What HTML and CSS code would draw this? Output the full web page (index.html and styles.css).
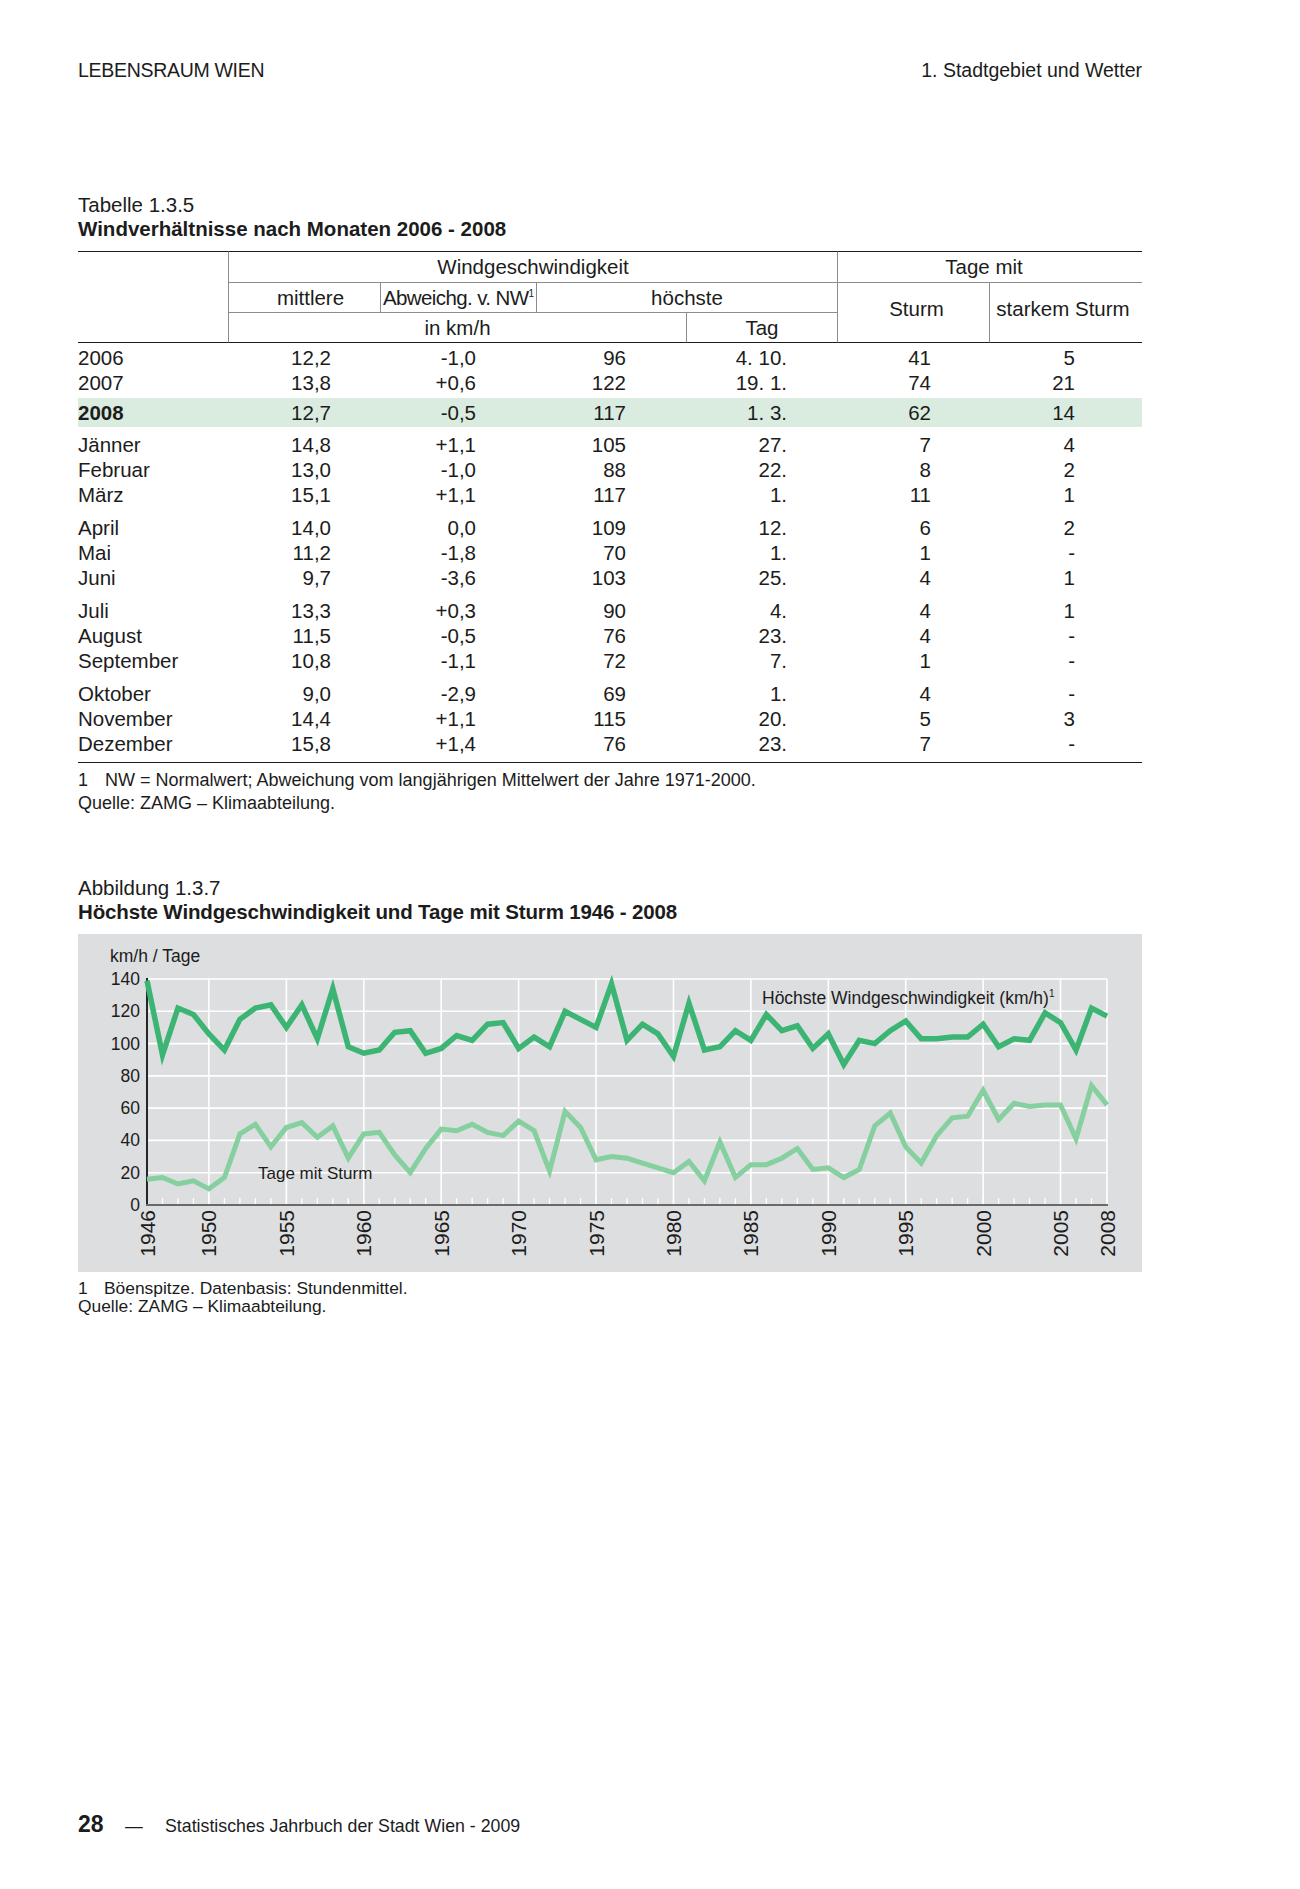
FILE: index.html
```html
<!DOCTYPE html>
<html lang="de">
<head>
<meta charset="utf-8">
<title>Windverhältnisse nach Monaten 2006 - 2008</title>
<link rel="stylesheet" href="styles.css">
</head>
<body>
<div class="page">
  <header class="running-head">
    <span class="rh-left">LEBENSRAUM WIEN</span>
    <span>1. Stadtgebiet und Wetter</span>
  </header>

  <section class="table-block">
    <div class="caption">
      <div class="cap-label">Tabelle 1.3.5</div>
      <div class="cap-title">Windverhältnisse nach Monaten 2006 - 2008</div>
    </div>
    <table class="wind">
      <colgroup>
        <col class="c1"><col class="c2"><col class="c3"><col class="c4"><col class="c5"><col class="c6"><col class="c7">
      </colgroup>
      <thead>
        <tr class="h1">
          <th rowspan="3" class="stub"></th>
          <th colspan="4" class="vl">Windgeschwindigkeit</th>
          <th colspan="2" class="vl tage">Tage mit</th>
        </tr>
        <tr class="h2">
          <th class="vl ht mit">mittlere</th>
          <th class="vl ht abw">Abweichg. v. NW<sup>1</sup></th>
          <th colspan="2" class="vl ht">höchste</th>
          <th rowspan="2" class="vl ht hb span2 st">Sturm</th>
          <th rowspan="2" class="vl ht hb span2 sst">starkem Sturm</th>
        </tr>
        <tr class="h3">
          <th colspan="3" class="vl ht hb">in km/h</th>
          <th class="vl ht hb">Tag</th>
        </tr>
      </thead>
      <tbody>
        <tr class="first"><td>2006</td><td>12,2</td><td>-1,0</td><td>96</td><td>4. 10.</td><td>41</td><td>5</td></tr>
        <tr><td>2007</td><td>13,8</td><td>+0,6</td><td>122</td><td>19. 1.</td><td>74</td><td>21</td></tr>
        <tr class="hl"><td class="yr">2008</td><td>12,7</td><td>-0,5</td><td>117</td><td>1. 3.</td><td>62</td><td>14</td></tr>
        <tr><td>Jänner</td><td>14,8</td><td>+1,1</td><td>105</td><td>27.</td><td>7</td><td>4</td></tr>
        <tr><td>Februar</td><td>13,0</td><td>-1,0</td><td>88</td><td>22.</td><td>8</td><td>2</td></tr>
        <tr><td>März</td><td>15,1</td><td>+1,1</td><td>117</td><td>1.</td><td>11</td><td>1</td></tr>
        <tr class="gs"><td>April</td><td>14,0</td><td>0,0</td><td>109</td><td>12.</td><td>6</td><td>2</td></tr>
        <tr><td>Mai</td><td>11,2</td><td>-1,8</td><td>70</td><td>1.</td><td>1</td><td>-</td></tr>
        <tr><td>Juni</td><td>9,7</td><td>-3,6</td><td>103</td><td>25.</td><td>4</td><td>1</td></tr>
        <tr class="gs"><td>Juli</td><td>13,3</td><td>+0,3</td><td>90</td><td>4.</td><td>4</td><td>1</td></tr>
        <tr><td>August</td><td>11,5</td><td>-0,5</td><td>76</td><td>23.</td><td>4</td><td>-</td></tr>
        <tr><td>September</td><td>10,8</td><td>-1,1</td><td>72</td><td>7.</td><td>1</td><td>-</td></tr>
        <tr class="gs"><td>Oktober</td><td>9,0</td><td>-2,9</td><td>69</td><td>1.</td><td>4</td><td>-</td></tr>
        <tr><td>November</td><td>14,4</td><td>+1,1</td><td>115</td><td>20.</td><td>5</td><td>3</td></tr>
        <tr class="last"><td>Dezember</td><td>15,8</td><td>+1,4</td><td>76</td><td>23.</td><td>7</td><td>-</td></tr>
      </tbody>
    </table>
    <div class="notes">
      <p><span class="fn">1</span>NW = Normalwert; Abweichung vom langjährigen Mittelwert der Jahre 1971-2000.</p>
      <p>Quelle: ZAMG – Klimaabteilung.</p>
    </div>
  </section>

  <section class="figure-block">
    <div class="caption">
      <div class="cap-label">Abbildung 1.3.7</div>
      <div class="cap-title fig-title">Höchste Windgeschwindigkeit und Tage mit Sturm 1946 - 2008</div>
    </div>
    <div class="chart">
      <svg class="chart-svg" width="1064" height="338" viewBox="0 0 1064 338">
        <g class="grid">
          <line x1="69" x2="1029" y1="45" y2="45"/>
          <line x1="69" x2="1029" y1="77.3" y2="77.3"/>
          <line x1="69" x2="1029" y1="109.6" y2="109.6"/>
          <line x1="69" x2="1029" y1="141.9" y2="141.9"/>
          <line x1="69" x2="1029" y1="174.1" y2="174.1"/>
          <line x1="69" x2="1029" y1="206.4" y2="206.4"/>
          <line x1="69" x2="1029" y1="238.7" y2="238.7"/>
          <line x1="130.9" x2="130.9" y1="45" y2="271"/>
          <line x1="208.4" x2="208.4" y1="45" y2="271"/>
          <line x1="285.8" x2="285.8" y1="45" y2="271"/>
          <line x1="363.2" x2="363.2" y1="45" y2="271"/>
          <line x1="440.6" x2="440.6" y1="45" y2="271"/>
          <line x1="518" x2="518" y1="45" y2="271"/>
          <line x1="595.5" x2="595.5" y1="45" y2="271"/>
          <line x1="672.9" x2="672.9" y1="45" y2="271"/>
          <line x1="750.3" x2="750.3" y1="45" y2="271"/>
          <line x1="827.7" x2="827.7" y1="45" y2="271"/>
          <line x1="905.1" x2="905.1" y1="45" y2="271"/>
          <line x1="982.5" x2="982.5" y1="45" y2="271"/>
          <line x1="1029" x2="1029" y1="45" y2="271"/>
        </g>
        <line class="ticks" x1="69" x2="1030" y1="267.5" y2="267.5"/>
        <line class="axis-y" x1="69" x2="69" y1="44" y2="272"/>
        <line class="axis-x" x1="68" x2="1030" y1="271" y2="271"/>

        <g transform="translate(69 271) scale(15.4839 -1.61428)">
          <polyline class="s-days" points="0,16 1,17 2,13 3,15 4,10 5,17 6,44 7,50 8,36 9,48 10,51 11,42 12,49 13,29 14,44 15,45 16,31 17,20 18,35 19,47 20,46 21,50 22,45 23,43 24,52 25,46 26,21 27,58 28,48 29,28 30,30 31,29 32,26 33,23 34,20 35,27 36,15 37,39 38,17 39,25 40,25 41,29 42,35 43,22 44,23 45,17 46,22 47,49 48,57 49,36 50,26 51,43 52,54 53,55 54,71 55,53 56,63 57,61 58,62 59,62 60,41 61,74 62,62"/>
          <polyline class="s-max" points="0,139 1,93 2,122 3,118 4,106 5,96 6,115 7,122 8,124 9,110 10,124 11,103 12,134 13,98 14,94 15,96 16,107 17,108 18,94 19,97 20,105 21,102 22,112 23,113 24,97 25,104 26,98 27,120 28,115 29,110 30,137 31,102 32,112 33,106 34,92 35,125 36,96 37,98 38,108 39,102 40,118 41,108 42,111 43,97 44,106 45,87 46,102 47,100 48,108 49,114 50,103 51,103 52,104 53,104 54,112 55,98 56,103 57,102 58,119 59,113 60,96 61,122 62,117"/>
        </g>

        <text class="unit" x="32" y="28">km/h / Tage</text>
        <g class="ylab">
          <text x="62" y="51">140</text>
          <text x="62" y="83.3">120</text>
          <text x="62" y="115.6">100</text>
          <text x="62" y="147.9">80</text>
          <text x="62" y="180.1">60</text>
          <text x="62" y="212.4">40</text>
          <text x="62" y="244.7">20</text>
          <text x="62" y="277">0</text>
        </g>
        <g class="xlab">
          <text transform="translate(76.5 276) rotate(-90)">1946</text>
          <text transform="translate(138.4 276) rotate(-90)">1950</text>
          <text transform="translate(215.9 276) rotate(-90)">1955</text>
          <text transform="translate(293.3 276) rotate(-90)">1960</text>
          <text transform="translate(370.7 276) rotate(-90)">1965</text>
          <text transform="translate(448.1 276) rotate(-90)">1970</text>
          <text transform="translate(525.5 276) rotate(-90)">1975</text>
          <text transform="translate(603 276) rotate(-90)">1980</text>
          <text transform="translate(680.4 276) rotate(-90)">1985</text>
          <text transform="translate(757.8 276) rotate(-90)">1990</text>
          <text transform="translate(835.2 276) rotate(-90)">1995</text>
          <text transform="translate(912.6 276) rotate(-90)">2000</text>
          <text transform="translate(990 276) rotate(-90)">2005</text>
          <text transform="translate(1036.5 276) rotate(-90)">2008</text>
        </g>
        <text class="series-label" x="180" y="245">Tage mit Sturm</text>
        <text class="series-label wide" x="684" y="70">Höchste Windgeschwindigkeit (km/h)<tspan class="sup" dy="-7">1</tspan></text>
      </svg>
    </div>
    <div class="notes small">
      <p><span class="fn">1</span>Böenspitze. Datenbasis: Stundenmittel.</p>
      <p>Quelle: ZAMG – Klimaabteilung.</p>
    </div>
  </section>

  <footer class="page-foot">
    <span class="page-no">28</span>
    <span class="dash">—</span>
    <span class="book">Statistisches Jahrbuch der Stadt Wien - 2009</span>
  </footer>
</div>
</body>
</html>
```

FILE: styles.css
```css
* {
  box-sizing: border-box;
}

body {
  margin: 0;
  background: #ffffff;
}

.page {
  width: 1300px;
  padding: 58px 158px 0 78px;
  font-family: "Liberation Sans", Arial, Helvetica, sans-serif;
  color: #1c1c1c;
}

.running-head {
  display: flex;
  justify-content: space-between;
  font-size: 19.5px;
  line-height: 24px;
}

.rh-left {
  letter-spacing: -0.3px;
}

.table-block {
  margin-top: 111px;
}

.caption {
  font-size: 20.5px;
  line-height: 24px;
}

.cap-title {
  font-weight: 700;
}

.fig-title {
  letter-spacing: -0.15px;
}

/* ---------- table ---------- */
table.wind {
  width: 1064px;
  table-layout: fixed;
  border-collapse: separate;
  border-spacing: 0;
  margin-top: 10px;
  font-size: 20.5px;
}

.c1 { width: 150px; }
.c2 { width: 152px; }
.c3 { width: 156px; }
.c4 { width: 150px; }
.c5 { width: 151px; }
.c6 { width: 152px; }
.c7 { width: 153px; }

table.wind th {
  font-weight: normal;
  padding: 0;
  text-align: center;
  vertical-align: middle;
  line-height: 24px;
  white-space: nowrap;
}

.h1 th {
  height: 31px;
  border-top: 1.5px solid #1c1c1c;
}

th.stub {
  border-bottom: 1.5px solid #1c1c1c;
}

th.vl {
  border-left: 1px solid #8c8c8c;
}

th.ht {
  border-top: 1px solid #8c8c8c;
}

th.hb {
  border-bottom: 1.5px solid #1c1c1c;
}

.h1 th.tage {
  padding-right: 12px;
}

.h2 th {
  height: 30px;
  vertical-align: top;
}

.h3 th {
  height: 31px;
  vertical-align: top;
}

.h2 th.span2 {
  vertical-align: middle;
  padding-bottom: 8px;
}

.h2 th.mit {
  padding-left: 12px;
}

.h2 th.st {
  padding-left: 6px;
}

.h2 th.sst {
  padding-right: 6px;
}

th.abw {
  letter-spacing: -0.6px;
}

th sup {
  font-size: 10px;
  line-height: 0;
  vertical-align: 8px;
  letter-spacing: 0;
}

table.wind td {
  height: 25px;
  padding: 0;
  line-height: 25px;
  text-align: right;
  white-space: nowrap;
}

table.wind td:first-child { text-align: left; }
table.wind td:nth-child(2) { padding-right: 49px; }
table.wind td:nth-child(3) { padding-right: 60px; }
table.wind td:nth-child(4) { padding-right: 60px; }
table.wind td:nth-child(5) { padding-right: 50px; }
table.wind td:nth-child(6) { padding-right: 58px; }
table.wind td:nth-child(7) { padding-right: 67px; }

tr.first td {
  height: 27px;
  padding-top: 2px;
}

tr.hl td {
  height: 37px;
  line-height: 29px;
  border-top: 3px solid transparent;
  border-bottom: 5px solid transparent;
  background: #daece0;
  background-clip: padding-box;
}

td.yr {
  font-weight: 700;
}

tr.gs td {
  height: 33px;
  padding-top: 8px;
}

tr.last td {
  height: 31.5px;
  padding-bottom: 5px;
  border-bottom: 1.5px solid #1c1c1c;
}

/* ---------- notes ---------- */
.notes {
  margin-top: 6px;
  font-size: 18px;
  line-height: 23px;
}

.notes p {
  margin: 0;
}

.fn {
  display: inline-block;
  width: 27px;
}

.notes.small {
  margin-top: 7px;
  font-size: 17.4px;
  line-height: 18px;
}

.notes.small .fn {
  width: 26px;
}

/* ---------- figure ---------- */
.figure-block {
  margin-top: 61.5px;
}

.chart {
  margin-top: 10px;
  height: 338px;
  background: #dddee0;
}

.chart-svg {
  display: block;
  font-family: "Liberation Sans", Arial, Helvetica, sans-serif;
}

.grid line {
  stroke: #ffffff;
  stroke-width: 1.6;
}

.ticks {
  stroke: #ffffff;
  stroke-width: 7;
  stroke-dasharray: 1.3 14.1839;
  stroke-dashoffset: 0.65;
}

.axis-y {
  stroke: #262626;
  stroke-width: 2;
}

.axis-x {
  stroke: #6a6a6a;
  stroke-width: 2;
}

.s-max,
.s-days {
  fill: none;
  vector-effect: non-scaling-stroke;
  stroke-linejoin: miter;
  stroke-miterlimit: 4;
}

.s-max {
  stroke: #3cb574;
  stroke-width: 5.5;
}

.s-days {
  stroke: #86cf9f;
  stroke-width: 5;
}

.unit {
  font-size: 17.5px;
  fill: #1c1c1c;
}

.ylab text {
  font-size: 17.5px;
  fill: #1c1c1c;
  text-anchor: end;
}

.xlab text {
  font-size: 21px;
  fill: #1c1c1c;
  text-anchor: end;
}

.series-label {
  font-size: 17px;
  fill: #1c1c1c;
}

.series-label.wide {
  font-size: 17.5px;
}

.sup {
  font-size: 10px;
}

/* ---------- footer ---------- */
.page-foot {
  margin-top: 497px;
  display: flex;
  align-items: baseline;
  font-size: 17.75px;
  line-height: 24px;
}

.page-no {
  width: 47px;
  font-weight: 700;
  font-size: 23px;
}

.dash {
  width: 40px;
}
```
